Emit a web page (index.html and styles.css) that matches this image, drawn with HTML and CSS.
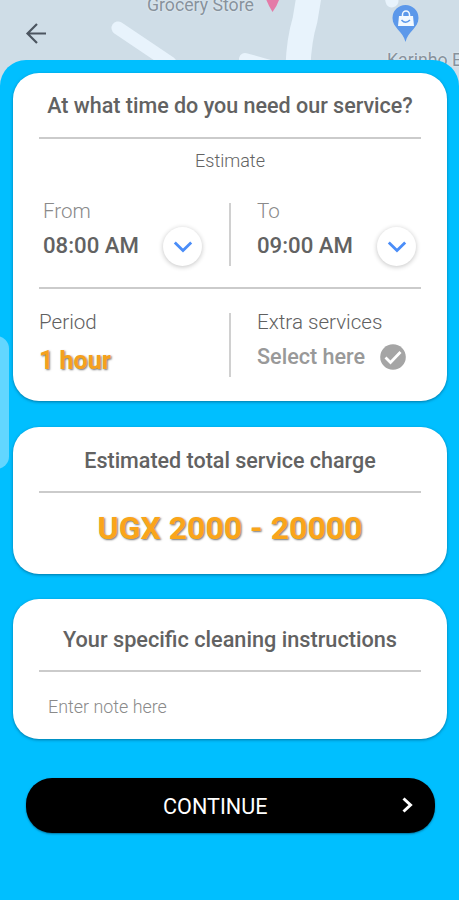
FILE: index.html
```html
<!DOCTYPE html>
<html lang="en">
<head>
<meta charset="utf-8">
<meta name="viewport" content="width=device-width, initial-scale=1">
<title>Book a service</title>
<link rel="stylesheet" href="styles.css">
</head>
<body>
<div class="screen">
  <header class="map">
    <svg class="map-art" width="459" height="90" viewBox="0 0 459 90" aria-hidden="true">
      <g fill="none" stroke="#e8f3fc">
        <path d="M118 28L170 63" stroke-width="13" stroke-linecap="round"/>
        <path d="M309 -4L305 20Q299 40 298 66" stroke-width="25"/>
        <path d="M245 59L270 66" stroke-width="12" stroke-linecap="round"/>
        <path d="M391 -4L392 1" stroke-width="13" stroke-linecap="round"/>
      </g>
      <path d="M265 -4H280Q279 3 272.500 12Q267 3 265 -4Z" fill="#e47ba8"/>
      <path d="M405.500 42C403 31 392.500 28 392.500 18A13 13 0 0 1 418.500 18C418.500 28 408 31 405.500 42Z" fill="#5c98ea"/>
      <path d="M399 16H413L414 26H398Z" fill="#f3f9ff"/>
      <path d="M402.500 16V14.500A3.500 3.500 0 0 1 409.500 14.500V16" fill="none" stroke="#f3f9ff" stroke-width="1.500"/>
      <path d="M401.500 20Q405.500 24.500 410 20" fill="none" stroke="#5c98ea" stroke-width="1.500"/>
    </svg>
    <span class="place grocery">Grocery Store</span>
    <span class="place karinho">Karinho E</span>
    <svg class="back" width="24" height="24" viewBox="0 0 24 24" fill="none" stroke="#4c5560" stroke-width="2.200" aria-label="Back"><path d="M22 11.500H3.500M13 2L3.500 11.500L13 21"/></svg>
  </header>
  <main class="sheet">
    <section class="card time-card">
      <h2>At what time do you need our service?</h2>
      <p class="estimate">Estimate</p>
      <div class="pair times">
        <div class="cell">
          <div><div class="label pale">From</div><div class="value">08:00 AM</div></div>
          <button class="drop" aria-label="Choose start time"><svg width="20" height="12" viewBox="0 0 20 12" fill="none" stroke="#4a8df8" stroke-width="2.800"><path d="M1.800 1.500L10 9.500L18.200 1.500"/></svg></button>
        </div>
        <div class="cell">
          <div><div class="label pale">To</div><div class="value">09:00 AM</div></div>
          <button class="drop" aria-label="Choose end time"><svg width="20" height="12" viewBox="0 0 20 12" fill="none" stroke="#4a8df8" stroke-width="2.800"><path d="M1.800 1.500L10 9.500L18.200 1.500"/></svg></button>
        </div>
      </div>
      <div class="pair details">
        <div class="cell">
          <div><div class="label">Period</div><div class="value hours">1 hour</div></div>
        </div>
        <div class="cell">
          <div><div class="label extra">Extra services</div>
          <div class="value select"><span>Select here</span><svg width="26" height="26" viewBox="0 0 26 26"><circle cx="13" cy="13" r="12.800" fill="#a5a5a5"/><path d="M5.500 13.500L10.500 18.500L20.500 8" fill="none" stroke="#fff" stroke-width="2.800"/></svg></div></div>
        </div>
      </div>
    </section>
    <section class="card charge-card">
      <h2>Estimated total service charge</h2>
      <p class="price">UGX 2000 - 20000</p>
    </section>
    <section class="card note-card">
      <h2>Your specific cleaning instructions</h2>
      <p class="note">Enter note here</p>
    </section>
    <button class="continue"><span>CONTINUE</span><svg width="12" height="18" viewBox="0 0 12 18" fill="none" stroke="#fff" stroke-width="3"><path d="M1.500 2.500L8.500 9L1.500 15.500"/></svg></button>
  </main>
  <div class="edge-handle"></div>
</div>
</body>
</html>
```
FILE: styles.css
```css
* { box-sizing: border-box; margin: 0; }
body { font-family: Roboto, "Liberation Sans", sans-serif; color: #626262; }
button { border: 0; padding: 0; font: inherit; }
svg { display: block; flex: none; }

.screen { position: relative; height: 900px; overflow: hidden; background: #cfdde7; }
.map { position: relative; height: 60px; padding: 22px 24px; }
.map-art { position: absolute; left: 0; top: 0; }
.back { position: relative; width: 24px; height: 24px; }
.place { position: absolute; font-size: 17.700px; line-height: 20px; color: #87929c; white-space: nowrap; text-shadow: 0 0 2px #eef5fa; }
.grocery { left: 147px; top: -5px; }
.karinho { left: 387px; top: 50px; }

.sheet {
  position: relative;
  height: 840px;
  padding: 12.5px 12px 0 13px;
  background: #00bfff;
  border-radius: 26px 26px 0 0;
}
.card {
  padding: 0 26px;
  margin-bottom: 25.500px;
  background: #fff;
  border-radius: 26px;
  box-shadow: 0 1px 3px rgba(0, 50, 80, .5);
}
.time-card { height: 328.500px; }
.charge-card { height: 147px; }
.note-card { height: 140px; margin-bottom: 38.500px; }
h2 {
  height: 66.500px;
  border-bottom: 2px solid #cbcbcb;
  font-size: 21.500px;
  font-weight: 500;
  line-height: 66px;
  text-align: center;
  white-space: nowrap;
}
.estimate { height: 64px; font-size: 18px; font-weight: 300; line-height: 44px; text-align: center; color: #636363; }
.pair { display: grid; grid-template-columns: 192px 1fr; }
.times { height: 86px; border-bottom: 2px solid #cbcbcb; }
.details { padding-top: 24px; }
.cell { height: 64px; display: flex; justify-content: space-between; padding-right: 5px; }
.cell:first-child { border-right: 2px solid #d0d0d0; padding-right: 27px; }
.cell:last-child { padding-left: 26px; }
.times .cell { height: 63px; }
.times .cell:first-child { padding-left: 4px; }
.label { font-size: 20.600px; font-weight: 300; line-height: 20px; color: #606060; }
.details .label { position: relative; top: -1px; }
.label.pale { color: #8a8a8a; margin-top: -2px; }
.value { margin-top: 11px; font-size: 22px; font-weight: 500; line-height: 26px; white-space: nowrap; }
.times .value { margin-top: 11px; font-size: 22.200px; }
.drop { width: 39px; height: 39px; margin-top: 24px; display: grid; place-items: center; border-radius: 50%; background: #fff; box-shadow: 0 1px 5px rgba(0, 0, 0, .24); }
.hours { font-size: 25px; font-weight: 700; margin-top: 15px; color: #f5a11c; text-shadow: 1px 1px 2px #777; }
.select { display: flex; gap: 15px; font-size: 21.600px; color: #999; }
.price { font-size: 32px; font-weight: 700; line-height: 71px; text-align: center; color: #faa51a; text-shadow: 1px 1px 2px #777; white-space: nowrap; }
.note { padding-left: 9px; font-size: 17.900px; font-weight: 300; line-height: 70px; color: #8a8a8a; }
.charge-card h2 { height: 66px; line-height: 67px; }
.note-card h2 { height: 72.500px; font-size: 21.700px; line-height: 81px; }
.continue { width: 408.500px; height: 55.500px; margin-left: 13px; padding: 0 21px 0 3px; display: flex; align-items: center; background: #000; color: #fff; border-radius: 26px; font-size: 21.600px; box-shadow: 0 1px 2px rgba(0, 40, 60, .5); }
.continue span { flex: 1; padding-top: 2px; text-align: center; }

/* translucent system panel handle */
.edge-handle { position: absolute; left: -16px; top: 336px; width: 25px; height: 133px; border-radius: 13px; background: rgba(150, 226, 255, .65); }
```
